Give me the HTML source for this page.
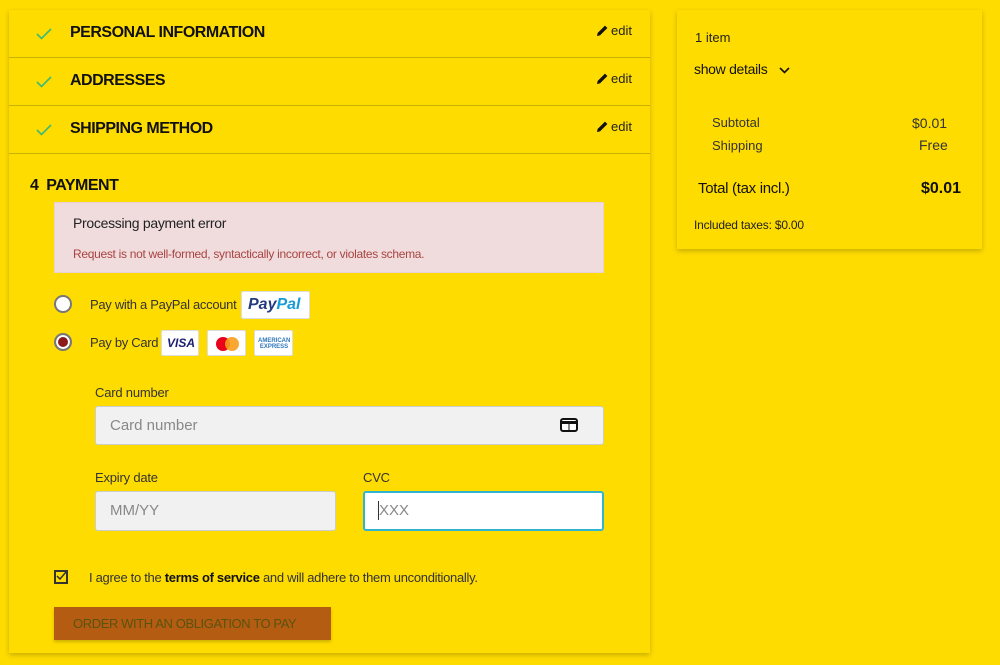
<!DOCTYPE html>
<html><head><meta charset="utf-8"><style>
*{box-sizing:border-box;margin:0;padding:0}
body{width:1000px;height:665px;background:#FFDC00;font-family:"Liberation Sans",sans-serif;color:#232323;position:relative;overflow:hidden}
.a{position:absolute;white-space:nowrap}
.card{position:absolute;background:#FFDC00;box-shadow:0 2px 5px rgba(0,0,0,.22)}
.hdr{position:absolute;left:9px;width:641px;height:48px;border-bottom:1px solid #c9b000}
.hdr .t{position:absolute;left:61px;top:14px;font-size:16px;font-weight:bold;letter-spacing:-.5px;color:#111}
.hdr .ck{position:absolute;left:27px;top:18px}
.hdr .ed{position:absolute;left:588px;top:13px;font-size:13px;color:#222}
.hdr .ed svg{vertical-align:-1px;margin-right:3px}
.lbl{font-size:13px;color:#333;letter-spacing:-.2px}
.inp{position:absolute;background:#f1f1f1;border:1px solid #ccc;border-radius:3px;font-size:15px;color:#888;padding-left:14px}
.logo{position:absolute;background:#fff;border:1px solid #ddd;border-radius:2px}
</style></head><body>
<div class="card" style="left:9px;top:10px;width:641px;height:643px"></div>
<div class="card" style="left:677px;top:10px;width:305px;height:239px"></div>

<div class="hdr" style="top:10px"><svg class="ck" width="16" height="12" viewBox="0 0 16 12"><path d="M1 6l4.5 4.5L15 1" fill="none" stroke="#3cb878" stroke-width="1.6"/></svg><div class="t">PERSONAL INFORMATION</div><div class="ed"><svg width="11" height="11" viewBox="0 0 11 11"><path d="M0 11l.6-3L8 .6 10.4 3 3 10.4z" fill="#111"/></svg>edit</div></div>
<div class="hdr" style="top:58px"><svg class="ck" width="16" height="12" viewBox="0 0 16 12"><path d="M1 6l4.5 4.5L15 1" fill="none" stroke="#3cb878" stroke-width="1.6"/></svg><div class="t">ADDRESSES</div><div class="ed"><svg width="11" height="11" viewBox="0 0 11 11"><path d="M0 11l.6-3L8 .6 10.4 3 3 10.4z" fill="#111"/></svg>edit</div></div>
<div class="hdr" style="top:106px"><svg class="ck" width="16" height="12" viewBox="0 0 16 12"><path d="M1 6l4.5 4.5L15 1" fill="none" stroke="#3cb878" stroke-width="1.6"/></svg><div class="t">SHIPPING METHOD</div><div class="ed"><svg width="11" height="11" viewBox="0 0 11 11"><path d="M0 11l.6-3L8 .6 10.4 3 3 10.4z" fill="#111"/></svg>edit</div></div>

<div class="a" style="left:30px;top:177px;font-size:16px;font-weight:bold;letter-spacing:-.5px;color:#111">4&nbsp;&nbsp;PAYMENT</div>
<div class="a" style="left:54px;top:202px;width:550px;height:71px;background:#f0dcdc;border:1px solid #ead0d0"></div>
<div class="a" style="left:73px;top:215px;font-size:14px;color:#222;letter-spacing:-.3px">Processing payment error</div>
<div class="a" style="left:73px;top:247px;font-size:12px;color:#a94442;letter-spacing:-.3px">Request is not well-formed, syntactically incorrect, or violates schema.</div>

<div class="a" style="left:54px;top:295px;width:18px;height:18px;border-radius:50%;background:#fff;border:2px solid #777"></div>
<div class="a" style="left:90px;top:297px;font-size:13px;color:#333;letter-spacing:-.3px">Pay with a PayPal account</div>
<div class="logo" style="left:241px;top:291px;width:69px;height:28px"><span class="a" style="left:6px;top:4px;font-size:16px;font-weight:bold;font-style:italic"><span style="color:#253b80">Pay</span><span style="color:#179bd7">Pal</span></span></div>

<div class="a" style="left:54px;top:333px;width:18px;height:18px;border-radius:50%;background:#8b1a1a;border:2px solid #777;box-shadow:inset 0 0 0 2px #fff"></div>
<div class="a" style="left:90px;top:335px;font-size:13px;color:#333;letter-spacing:-.3px">Pay by Card</div>
<div class="logo" style="left:161px;top:330px;width:38px;height:26px"><span class="a" style="left:5px;top:5px;font-size:12px;font-weight:bold;font-style:italic;color:#1a1f71">VISA</span></div>
<div class="logo" style="left:207px;top:330px;width:39px;height:26px"><span class="a" style="left:8px;top:6px;width:14px;height:14px;border-radius:50%;background:#eb001b"></span><span class="a" style="left:17px;top:6px;width:14px;height:14px;border-radius:50%;background:#f79e1b;opacity:.9"></span></div>
<div class="logo" style="left:254px;top:330px;width:39px;height:26px"><span class="a" style="left:3px;top:7px;font-size:6px;line-height:6px;font-weight:bold;color:#2e77bc;text-align:center;width:32px">AMERICAN<br>EXPRESS</span></div>

<div class="a lbl" style="left:95px;top:385px">Card number</div>
<div class="inp" style="left:95px;top:406px;width:509px;height:39px;line-height:37px">Card number</div>
<svg class="a" style="left:560px;top:418px" width="18" height="14" viewBox="0 0 18 14"><rect x="1" y="1" width="16" height="12" rx="2" fill="#fff" stroke="#111" stroke-width="2"/><rect x="1" y="3" width="16" height="3" fill="#111"/><path d="M9 6v7" stroke="#111"/></svg>
<div class="a lbl" style="left:95px;top:470px">Expiry date</div>
<div class="inp" style="left:95px;top:491px;width:241px;height:40px;line-height:38px">MM/YY</div>
<div class="a lbl" style="left:363px;top:470px">CVC</div>
<div class="inp" style="left:363px;top:491px;width:241px;height:40px;line-height:36px;background:#fff;border:2px solid #2fb5d2">XXX</div>
<div class="a" style="left:378px;top:501px;width:1px;height:19px;background:#333"></div>

<div class="a" style="left:54px;top:570px;width:14px;height:14px;border:2px solid #333"></div>
<svg class="a" style="left:56px;top:571px" width="11" height="10" viewBox="0 0 11 10"><path d="M1 5l3 3 6-7" fill="none" stroke="#333" stroke-width="1.5"/></svg>
<div class="a" style="left:89px;top:570px;font-size:13px;color:#333;letter-spacing:-.3px">I agree to the <b style="color:#111">terms of service</b> and will adhere to them unconditionally.</div>
<div class="a" style="left:54px;top:607px;width:277px;height:33px;background:#b45c12;box-shadow:0 2px 3px rgba(0,0,0,.2);color:#5b5210;font-size:13px;line-height:33px;padding-left:19px;letter-spacing:-.4px">ORDER WITH AN OBLIGATION TO PAY</div>

<div class="a" style="left:695px;top:30px;font-size:13px;color:#222">1 item</div>
<div class="a" style="left:694px;top:61px;font-size:14px;color:#111;letter-spacing:-.3px">show details</div>
<svg class="a" style="left:779px;top:67px" width="11" height="7" viewBox="0 0 11 7"><path d="M1 1l4.5 4.5L10 1" fill="none" stroke="#111" stroke-width="1.6"/></svg>
<div class="a" style="left:712px;top:115px;font-size:13px;color:#333">Subtotal</div>
<div class="a" style="left:912px;top:115px;font-size:14px;color:#333">$0.01</div>
<div class="a" style="left:712px;top:138px;font-size:13px;color:#333">Shipping</div>
<div class="a" style="left:919px;top:137px;font-size:14px;color:#333">Free</div>
<div class="a" style="left:698px;top:180px;font-size:15px;color:#111;letter-spacing:-.3px">Total (tax incl.)</div>
<div class="a" style="left:921px;top:180px;font-size:16px;font-weight:bold;color:#111">$0.01</div>
<div class="a" style="left:694px;top:218px;font-size:12px;color:#222;letter-spacing:-.2px">Included taxes: $0.00</div>
</body></html>
